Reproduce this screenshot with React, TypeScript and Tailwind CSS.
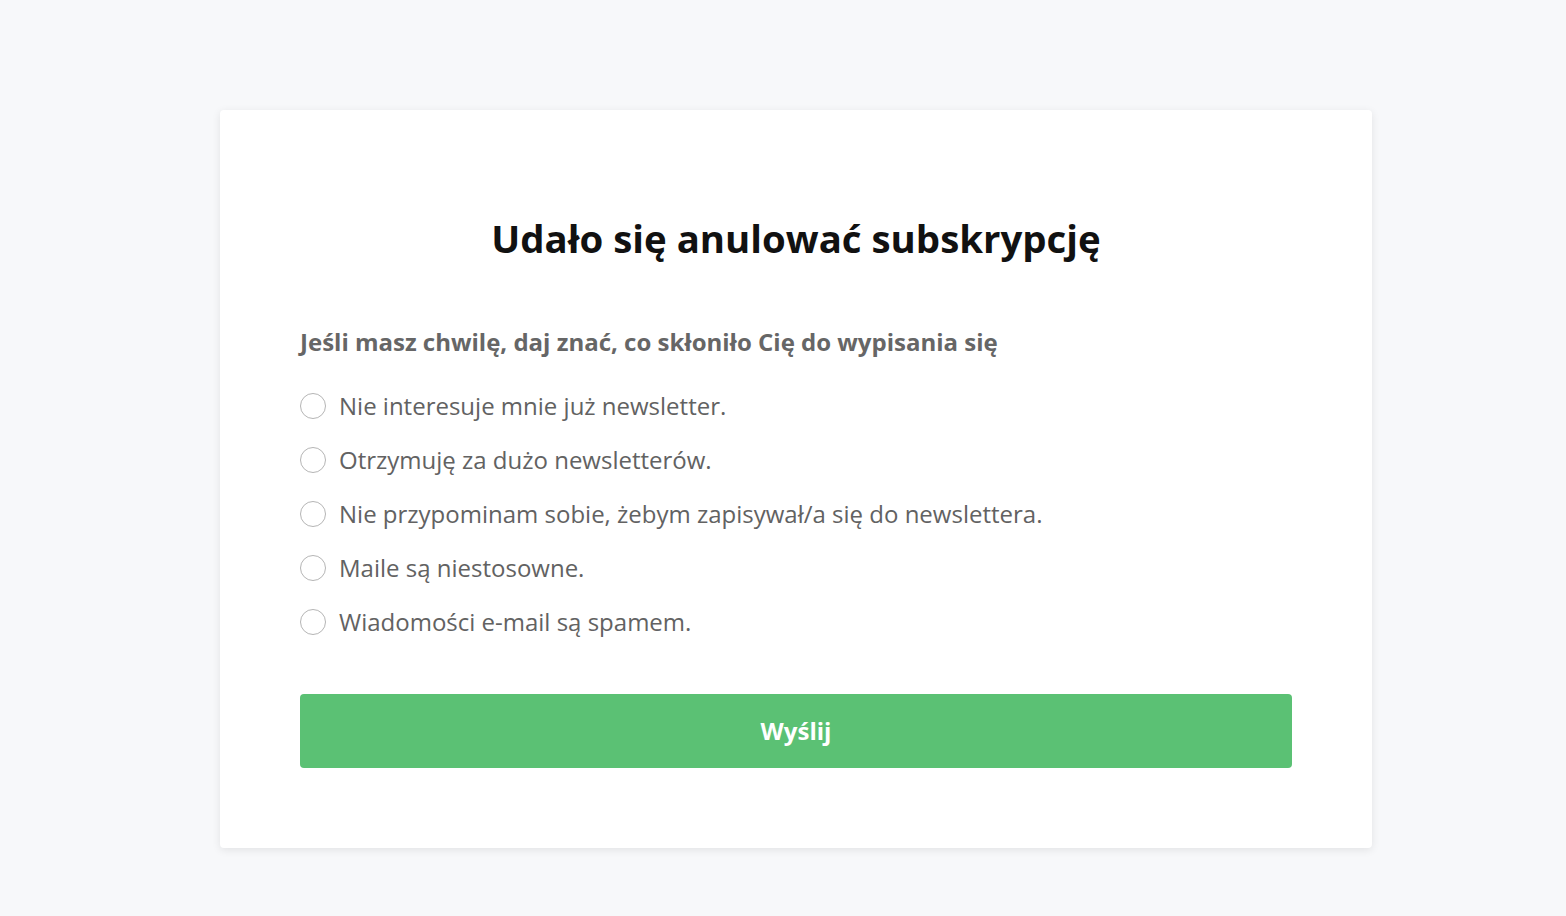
import React from "react";

const options = [
  "Nie interesuje mnie już newsletter.",
  "Otrzymuję za dużo newsletterów.",
  "Nie przypominam sobie, żebym zapisywał/a się do newslettera.",
  "Maile są niestosowne.",
  "Wiadomości e-mail są spamem.",
];

export default function App() {
  return (
    <div
      className="min-h-[916px] w-full bg-[#f7f8fa] pt-[110px]"
      style={{ fontFamily: '"Open Sans", "Noto Sans", sans-serif' }}
    >
      <div className="ml-[220px] w-[1152px] h-[738px] rounded-[4px] bg-white shadow-[0_2px_8px_rgba(0,0,0,0.09)] px-[80px] pt-[103px]">
        <h1 className="text-center text-[38.4px] leading-[50px] font-bold text-[#111]">
          Udało się anulować subskrypcję
        </h1>
        <p className="mt-[64px] text-[24px] leading-[30px] font-bold text-[#666]">
          Jeśli masz chwilę, daj znać, co skłoniło Cię do wypisania się
        </p>
        <div className="mt-[34px] flex flex-col gap-[24px]">
          {options.map((o) => (
            <label key={o} className="flex items-center gap-[13px] h-[30px]">
              <span className="w-[26px] h-[26px] rounded-full border border-[#b5b5b5] bg-white shrink-0" />
              <span className="text-[24px] leading-[30px] text-[#626262]">{o}</span>
            </label>
          ))}
        </div>
        <button className="mt-[57px] w-full h-[74px] rounded-[4px] bg-[#5bc174] text-white text-[24px] font-bold">
          Wyślij
        </button>
      </div>
    </div>
  );
}
